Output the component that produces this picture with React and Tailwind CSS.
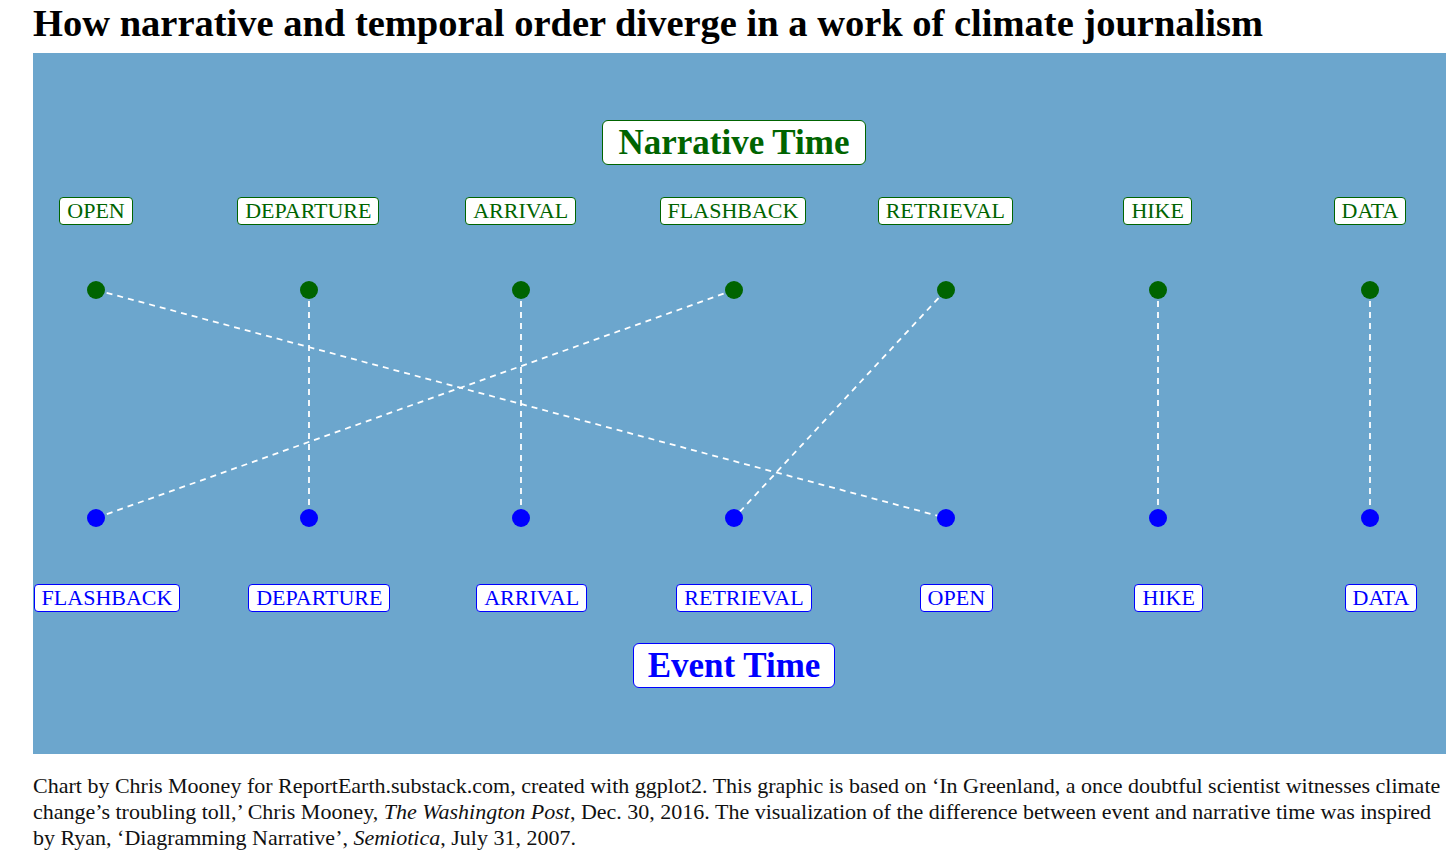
import React from 'react';

// dot centres inside the plot panel
const XS = [63, 276, 488, 701, 913, 1125, 1337];
const TOP_Y = 65;
const BOTTOM_Y = 293;

const narrative = ['OPEN', 'DEPARTURE', 'ARRIVAL', 'FLASHBACK', 'RETRIEVAL', 'HIKE', 'DATA'];
const events = ['FLASHBACK', 'DEPARTURE', 'ARRIVAL', 'RETRIEVAL', 'OPEN', 'HIKE', 'DATA'];

const serif = "font-['Liberation_Serif','Times_New_Roman',serif]";

// zero-width slots spread with justify-between, each label centred on its slot
const LabelRow = ({ items, className, labelClass }) => (
  <div className={`flex justify-between ${className}`}>
    {items.map((name) => (
      <div key={name} className="w-0 flex justify-center">
        <div className={`whitespace-nowrap bg-white rounded-[4px] border px-[7px] py-[2px] text-[22px] leading-none ${labelClass}`}>
          {name}
        </div>
      </div>
    ))}
  </div>
);

export default function App() {
  return (
    <div className={`bg-white w-[1456px] h-[860px] pl-[33px] ${serif}`}>
      <h1 className="pt-[1px] h-[53px] text-[38.5px] font-bold text-black leading-[44px] whitespace-nowrap">
        How narrative and temporal order diverge in a work of climate journalism
      </h1>

      <div className="w-[1413px] h-[701px] bg-[#6ca6cd] flex flex-col pt-[67px]">
        <div className="flex justify-center pr-[11px]">
          <div className="whitespace-nowrap bg-white rounded-[6px] border border-[#006400] px-[15px] py-[4px] text-[35px] font-bold leading-none text-[#006400]">
            Narrative Time
          </div>
        </div>

        <LabelRow
          items={narrative}
          className="mt-[32px] ml-[63px] w-[1274px]"
          labelClass="border-[#006400] text-[#006400]"
        />

        <svg width="1413" height="359" className="block">
          {narrative.map((name, i) => {
            const j = events.indexOf(name);
            return (
              <line
                key={name}
                x1={XS[i]}
                y1={TOP_Y}
                x2={XS[j]}
                y2={BOTTOM_Y}
                stroke="#ffffff"
                strokeWidth="1.8"
                strokeDasharray="6 5"
              />
            );
          })}
          {XS.map((x) => (
            <circle key={'t' + x} cx={x} cy={TOP_Y} r="9" fill="#006400" />
          ))}
          {XS.map((x) => (
            <circle key={'b' + x} cx={x} cy={BOTTOM_Y} r="9" fill="#0000ff" />
          ))}
        </svg>

        <LabelRow
          items={events}
          className="ml-[74px] w-[1274px]"
          labelClass="border-[#0000ff] text-[#0000ff]"
        />

        <div className="flex justify-center pr-[11px] mt-[31px]">
          <div className="whitespace-nowrap bg-white rounded-[6px] border border-[#0000ff] px-[14px] py-[4px] text-[35px] font-bold leading-none text-[#0000ff]">
            Event Time
          </div>
        </div>
      </div>

      <p className="pt-[19px] text-[22px] leading-[26px] text-[#111] whitespace-nowrap">
        Chart by Chris Mooney for ReportEarth.substack.com, created with ggplot2. This graphic is based on ‘In Greenland, a once doubtful scientist witnesses climate
        <br />
        change’s troubling toll,’ Chris Mooney, <i>The Washington Post</i>, Dec. 30, 2016. The visualization of the difference between event and narrative time was inspired
        <br />
        by Ryan, ‘Diagramming Narrative’, <i>Semiotica</i>, July 31, 2007.
      </p>
    </div>
  );
}
